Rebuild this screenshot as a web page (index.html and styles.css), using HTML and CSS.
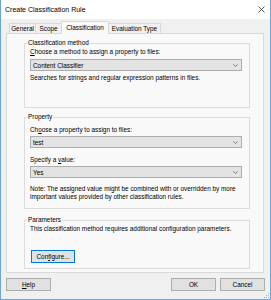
FILE: index.html
```html
<!DOCTYPE html>
<html>
<head>
<meta charset="utf-8">
<link rel="stylesheet" href="styles.css">
</head>
<body>
<div class="window">
  <div class="titlebar">
    <span class="title">Create Classification Rule</span>
    <svg class="close" width="7" height="7" viewBox="0 0 7 7"><path d="M0.5 0.5 L6.5 6.5 M6.5 0.5 L0.5 6.5" stroke="#333" stroke-width="0.8" fill="none"/></svg>
  </div>
  <div class="body">
    <div class="tabs">
      <div class="tab t-general">General</div>
      <div class="tab t-scope">Scope</div>
      <div class="tab t-class active">Classification</div>
      <div class="tab t-eval">Evaluation Type</div>
    </div>
    <div class="panel">
      <div class="group g1">
        <span class="legend">Classification method</span>
        <div class="line"><u>C</u>hoose a method to assign a property to files:</div>
        <div class="combo c1"><span>Content Classifier</span><svg class="chev" width="5" height="3" viewBox="0 0 5 3"><path d="M0.3 0.3 L2.5 2.5 L4.7 0.3" stroke="#555" stroke-width="0.7" fill="none"/></svg></div>
        <div class="line l-search">Searches for strings and regular expression patterns in files.</div>
      </div>
      <div class="group g2">
        <span class="legend">Property</span>
        <div class="line">Ch<u>o</u>ose a property to assign to files:</div>
        <div class="combo c2"><span>test</span><svg class="chev" width="5" height="3" viewBox="0 0 5 3"><path d="M0.3 0.3 L2.5 2.5 L4.7 0.3" stroke="#555" stroke-width="0.7" fill="none"/></svg></div>
        <div class="line l-spec">Specify a <u>v</u>alue:</div>
        <div class="combo c2"><span>Yes</span><svg class="chev" width="5" height="3" viewBox="0 0 5 3"><path d="M0.3 0.3 L2.5 2.5 L4.7 0.3" stroke="#555" stroke-width="0.7" fill="none"/></svg></div>
        <div class="note">Note: The assigned value might be combined with or overridden by more<br>important values provided by other classification rules.</div>
      </div>
      <div class="group g3">
        <span class="legend">Parameters</span>
        <div class="line">This classification method requires additional configuration parameters.</div>
        <button class="btn configure">Con<u>f</u>igure...</button>
      </div>
    </div>
    <div class="footer">
      <button class="btn"><u>H</u>elp</button>
      <div class="spacer"></div>
      <button class="btn">OK</button>
      <button class="btn">Cancel</button>
      <svg class="grip" width="5" height="5" viewBox="0 0 5 5"><g fill="#b0b0b0"><rect x="4" y="0" width="1" height="1"/><rect x="2" y="2" width="1" height="1"/><rect x="4" y="2" width="1" height="1"/><rect x="0" y="4" width="1" height="1"/><rect x="2" y="4" width="1" height="1"/><rect x="4" y="4" width="1" height="1"/></g></svg>
    </div>
  </div>
</div>
</body>
</html>
```
FILE: styles.css
```css
* { box-sizing: border-box; }
html, body { margin: 0; padding: 0; }
body {
  width: 271px;
  height: 300px;
  overflow: hidden;
  font-family: "Liberation Sans", Arial, sans-serif;
  font-size: 6.4px;
  color: #000;
  background: #f0f0f0;
}
.window {
  width: 271px;
  height: 300px;
  border: 1px solid #68a6dd;
  border-top: none;
  display: flex;
  flex-direction: column;
  background: #f0f0f0;
}
.titlebar {
  height: 19px;
  flex: none;
  background: #fff;
  display: flex;
  align-items: center;
  justify-content: space-between;
  padding: 0 5px 1px 4px;
}
.title { font-size: 7px; color: #000; }
.close { display: block; }
.body {
  flex: 1;
  display: flex;
  flex-direction: column;
  position: relative;
}
.tabs {
  height: 14px;
  display: flex;
  align-items: flex-end;
  padding-left: 8px;
  position: relative;
  z-index: 2;
}
.tab {
  height: 10px;
  border: 1px solid #d9d9d9;
  border-bottom: none;
  background: #f0f0f0;
  text-align: center;
  line-height: 9px;
  white-space: nowrap;
}
.t-general { width: 27px; }
.t-scope { width: 27px; margin-left: -1px; }
.t-class { width: 48px; margin-left: -1px; }
.t-eval { width: 53px; margin-left: -1px; }
.tab.active {
  height: 13px;
  margin-bottom: -1px;
  background: #f9f9f9;
  line-height: 11px;
  position: relative;
  z-index: 3;
}
.panel {
  margin-left: 5px;
  width: 258px;
  height: 240px;
  flex: none;
  border: 1px solid #d9d9d9;
  background: #f9f9f9;
  padding: 0 13px 0 17px;
  display: flex;
  flex-direction: column;
}
.group {
  position: relative;
  border: 1px solid #dcdcdc;
  padding: 0 7px 0 5px;
  flex: none;
}
.legend {
  position: absolute;
  left: 2px;
  top: -5px;
  padding: 0 1px;
  line-height: 8px;
  background: #f9f9f9;
}
.line { line-height: 8px; white-space: nowrap; }
.g1 { margin-top: 9px; height: 65px; padding-top: 4px; }
.g2 { margin-top: 9px; height: 92px; padding-top: 8px; }
.g3 { margin-top: 11px; height: 49px; padding-top: 4px; }
.combo {
  height: 12px;
  border: 1px solid #adadad;
  background: #e3e3e3;
  display: flex;
  align-items: center;
  justify-content: space-between;
  padding: 0 3px 0 2px;
}
.chev { display: block; }
.c1 { margin-top: 3px; }
.c2 { margin-top: 2px; }
.l-search { margin-top: 3px; }
.l-spec { margin-top: 8px; }
.note { margin-top: 7px; line-height: 8px; white-space: nowrap; }
.btn {
  font-family: "Liberation Sans", Arial, sans-serif;
  font-size: 6.4px;
  color: #000;
  height: 13px;
  width: 45px;
  border: 1px solid #adadad;
  background: #e1e1e1;
  padding: 0;
  margin: 0;
  line-height: 10px;
  text-align: center;
}
.configure {
  display: block;
  width: 44px;
  margin-top: 17px;
  margin-left: 1px;
  border-color: #0078d7;
}
.footer {
  flex: 1;
  display: flex;
  align-items: flex-start;
  padding: 5px 5px 0 5px;
  gap: 4px;
  position: relative;
}
.spacer { flex: 1; }
.grip { position: absolute; right: 1px; bottom: 1px; }
```
